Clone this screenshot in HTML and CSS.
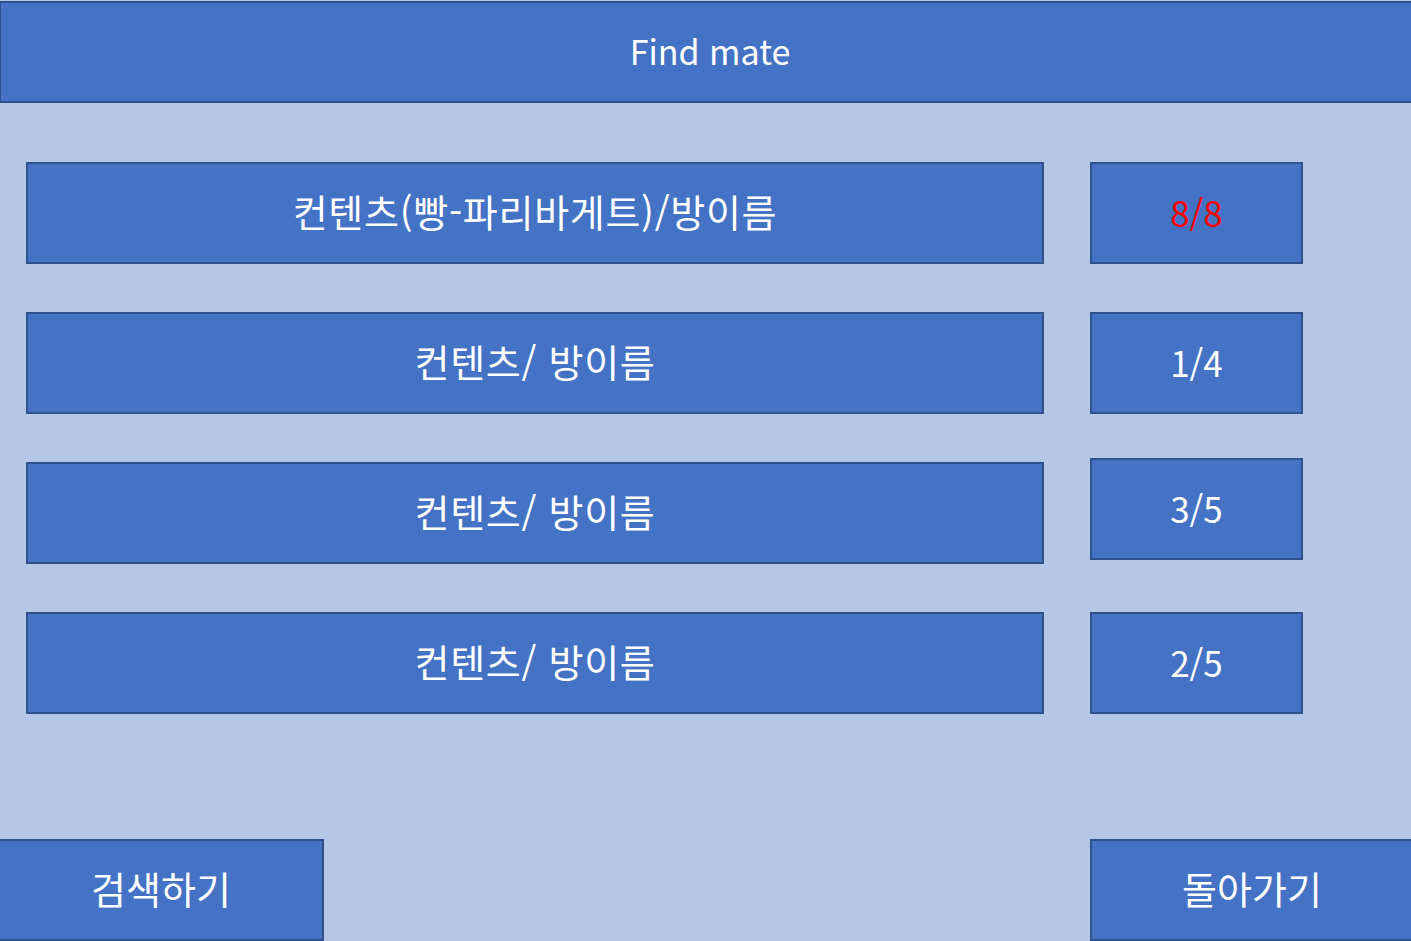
FILE: index.html
```html
<!DOCTYPE html>
<html lang="ko">
<head>
<meta charset="utf-8">
<title>Find mate</title>
<link rel="stylesheet" href="styles.css">
</head>
<body>
<div class="page">
  <header class="box header">Find mate</header>
  <main class="list">
    <div class="row">
      <div class="box room">컨텐츠(빵-파리바게트)/방이름</div>
      <div class="box count full">8/8</div>
    </div>
    <div class="row">
      <div class="box room">컨텐츠/ 방이름</div>
      <div class="box count">1/4</div>
    </div>
    <div class="row">
      <div class="box room">컨텐츠/ 방이름</div>
      <div class="box count raised">3/5</div>
    </div>
    <div class="row">
      <div class="box room">컨텐츠/ 방이름</div>
      <div class="box count">2/5</div>
    </div>
  </main>
  <footer class="footer">
    <div class="box btn search">검색하기</div>
    <div class="box btn back">돌아가기</div>
  </footer>
</div>
</body>
</html>
```
FILE: styles.css
```css
html, body {
  margin: 0;
  padding: 0;
}
body {
  background: #B4C7E7;
  font-family: "Noto Sans CJK KR", "Noto Sans", sans-serif;
  overflow: hidden;
}
.page {
  width: 1411px;
  height: 941px;
  display: flex;
  flex-direction: column;
  overflow: hidden;
}
.box {
  box-sizing: border-box;
  background: #4472C4;
  border: 2px solid #2F528F;
  color: #FFFFFF;
  display: flex;
  align-items: center;
  justify-content: center;
  font-size: 35px;
  line-height: 1;
}
.header {
  margin: 1px 0 0 -1px;
  width: 1414px;
  height: 102px;
  font-size: 34px;
  padding: 0 0 2px 8px;
}
.list {
  display: flex;
  flex-direction: column;
  gap: 48px;
  padding: 59px 0 0 26px;
}
.row {
  display: flex;
  align-items: flex-start;
  gap: 46px;
}
.room {
  width: 1018px;
  height: 102px;
  padding-bottom: 4px;
  font-size: 38px;
  letter-spacing: 0.7px;
}
.count {
  width: 213px;
  height: 102px;
  padding-bottom: 4px;
}
.count.full {
  color: #FF0000;
}
.count.raised {
  margin-top: -4px;
}
.footer {
  margin-top: auto;
  display: flex;
  justify-content: space-between;
}
.btn {
  height: 102px;
  padding-bottom: 4px;
  font-size: 38px;
}
.search {
  width: 326px;
  margin-left: -2px;
}
.back {
  width: 324px;
  margin-right: -3px;
}
```
